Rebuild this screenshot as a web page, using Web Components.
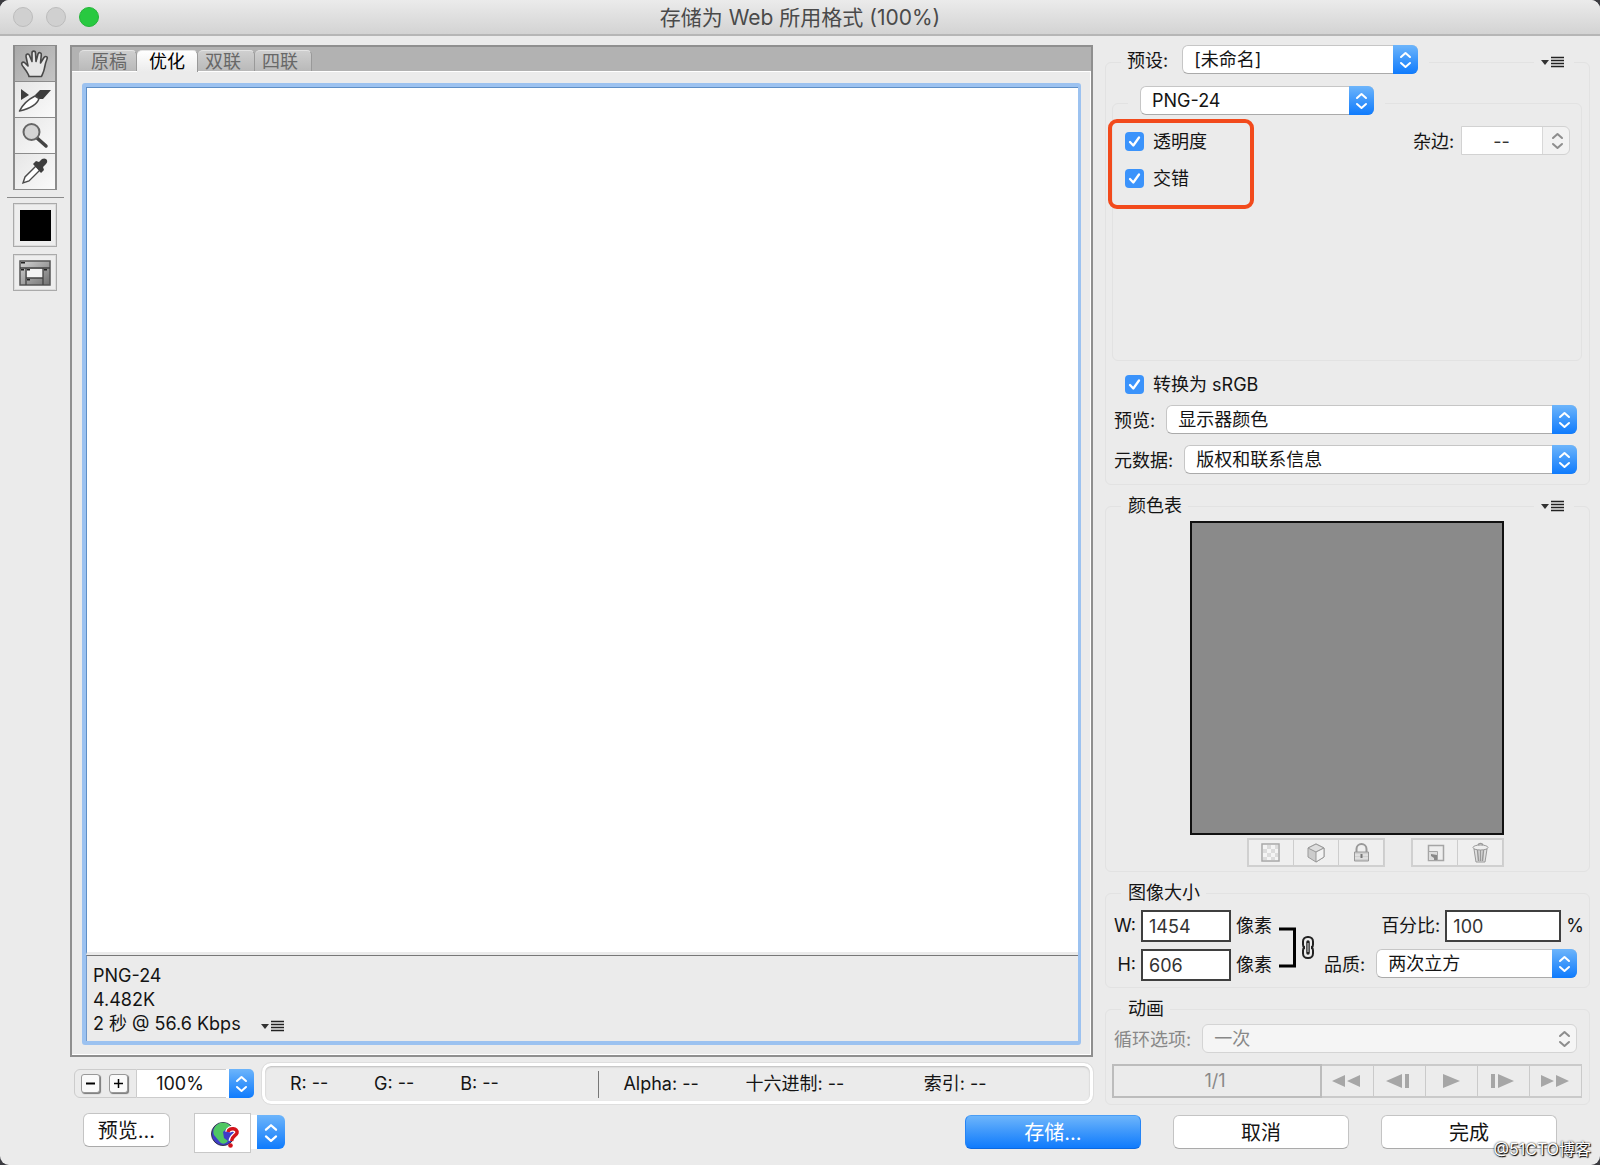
<!DOCTYPE html>
<html lang="zh-CN">
<head>
<meta charset="utf-8">
<title>存储为 Web 所用格式</title>
<style>
html, body { margin: 0; min-height: 100vh; }
body {
  display: flex; background: #3b3b40; color: #141414;
  font: 18px/24px Inter, "Noto Sans CJK SC", sans-serif;
}
</style>
</head>
<body>
<save-dialog></save-dialog>
<script>
const define = (name, render, wire) => customElements.define(name, class extends HTMLElement {
  constructor() { super(); this.attachShadow({ mode: 'open' }); }
  connectedCallback() {
    this.shadowRoot.innerHTML = '<style>*{box-sizing:border-box}button,input,select{font:inherit;color:inherit;margin:0}button{cursor:pointer;padding:0}</style>' +
      render((key, fallback = '') => this.getAttribute(key) ?? fallback, this);
    if (wire) wire(this.shadowRoot, this);
  }
});

const chevrons = (color, w = 25, h = 29) => `<svg width="${w}" height="${h}" viewBox="0 0 25 29" fill="none" stroke="${color}" stroke-width="2" stroke-linecap="round" stroke-linejoin="round" aria-hidden="true"><path d="M8 12 12.500 8 17 12M8 18 12.500 22 17 18"/></svg>`;
const blue = 'linear-gradient(#6db5fb, #3d97fb 50%, #0f7bfd)';

define('title-bar', a => `
<style>
:host { display: grid; grid-template-columns: 1fr auto 1fr; align-items: center; height: 36px; padding: 0 13px; box-sizing: border-box;
  background: linear-gradient(#ebebeb, #d3d3d3); border-bottom: 2px solid #b6b6b6; border-radius: 9px 9px 0 0; }
.lights { display: flex; gap: 13px; }
.lights button { width: 20px; height: 20px; border-radius: 50%; border: 1px solid #bcbcbc; background: #d0d0d0; }
.lights .zoom { background: #28c940; border-color: #24b539; }
h1 { margin: 0; padding-top: 2px; font-size: 21px; line-height: 32px; font-weight: 400; color: #4a4a4a; }
</style>
<div class="lights"><button aria-label="关闭"></button><button aria-label="最小化"></button><button class="zoom" aria-label="缩放"></button></div>
<h1><slot></slot></h1>`);

define('tool-strip', () => `
<style>
:host { display: flex; flex-direction: column; width: 70px; padding: 9px 13px 0; box-sizing: border-box; }
.set { display: flex; flex-direction: column; border: solid #8b8b8b; border-width: 1px 2px 0; }
.set button { display: grid; place-items: center; height: 36px; border: 0; border-bottom: 1px solid #8b8b8b; background: linear-gradient(135deg, #e6e6e6, #fafafa); }
.set button.on { background: linear-gradient(135deg, #a9a9a9, #c4c4c4); }
hr { width: 57px; align-self: center; margin: 7px 0 5px; border: 0; border-top: 1px solid #8b8b8b; }
.well { display: grid; place-items: center; height: 44px; border: 1px solid #aaa; background: #eee; outline: 1px solid #ddd; outline-offset: -2px; }
.well i { width: 31px; height: 31px; background: #000; }
.slices { height: 37px; margin-top: 7px; }
</style>
<div class="set">
<button class="on" aria-label="抓手工具"><svg width="32" height="32" viewBox="0 0 32 32"><path d="M10 28.500C9 24 4 19 3 17c-1-2 .5-3.500 2.500-2.500L9 18 7 8.500C6.500 6 9.500 5 10.500 7.500l2.500 6V5c0-2.500 3.500-2.500 3.500 0l.5 8.500 2-7.500c.8-2.300 3.700-1.500 3.300.8L21.500 15 25 9.500c1.500-2 4-.8 3 1.500-1.500 3.500-2 6-2.500 9-.4 3-1.500 5-3 8.500z" fill="#e6e6e6" stroke="#484848" stroke-width="1.600" stroke-linejoin="round"/></svg></button>
<button aria-label="切片选择工具"><svg width="34" height="28" viewBox="0 0 34 28"><path d="M3 3v11l8-5zM17 9l5-5h11l-8 9h-6z" fill="#3d3d3d"/><path d="M1.500 25C5 18 11 13 17 10l4 2.500C19 19 10 23 1.500 25z" fill="#fff" stroke="#4a4a4a" stroke-width="1.500" stroke-linejoin="round"/></svg></button>
<button aria-label="缩放工具"><svg width="30" height="30" viewBox="0 0 30 30"><path d="m17 17 9 8" stroke="#444" stroke-width="3.500" stroke-linecap="round"/><circle cx="11.500" cy="11" r="8" fill="#d4d4d4" stroke="#666" stroke-width="2"/></svg></button>
<button aria-label="吸管工具"><svg width="30" height="30" viewBox="0 0 30 30"><path d="M16 9 5 20l-2 6 6-2 11-11z" fill="#fff" stroke="#4a4a4a" stroke-width="1.400"/><path d="m13 7 3-3 3 1 3-3c4-2 7 2 4 5l-3 3 1 3-3 3z" fill="#3d3d3d"/></svg></button>
</div>
<hr>
<button class="well" aria-label="吸管颜色"><i></i></button>
<button class="well slices" aria-label="切换切片可见性"><svg width="32" height="26" viewBox="0 0 32 26"><defs><linearGradient id="g" x1="0" y1="0" x2="1" y2="1"><stop stop-color="#d4d4d4"/><stop offset="1" stop-color="#707070"/></linearGradient></defs><path d="M1 1h30v24H1z" fill="url(#g)" stroke="#555" stroke-width="1.500"/><path d="M8 9h16v9H8z" fill="#f4f4f4"/><path d="M1 8h30M7 8v17M24 8v17M7 18h17" stroke="#444" stroke-width="1.300" fill="none"/><path d="M2 2h4v1.500H2zM2 9h3v1.500H2zM8 9h3v1.500H8zM25 9h3v1.500h-3zM8 19h3v1.500H8z" fill="#222"/></svg></button>`);

define('view-tabs', a => `
<style>
:host { display: flex; align-items: flex-end; height: 25px; padding-left: 7px; box-sizing: border-box; background: #b2b2b2; border-bottom: 1px solid #fff; }
button { height: 21px; padding: 2px 13px 0 7px; border: 0; border-right: 1px solid #999; border-top: 1px solid #e4e4e4; border-radius: 5px 5px 0 0;
  background: linear-gradient(#cfcfcf, #b9b9b9); color: #686868; line-height: 18px; }
button:first-of-type { padding: 2px 9px 0 12px; }
button.on { height: 22px; margin-bottom: -1px; padding: 1px 12px 0; background: linear-gradient(#fff, #ebebeb); color: #000; }
</style>${a('items').split(',').map(t => `<button${t === a('current') ? ' class="on" aria-pressed="true"' : ''}>${t}</button>`).join('')}`);

define('menu-glyph', () => `
<style>:host { display: block; } button { display: block; border: 0; background: none; }</style>
<button aria-label="菜单"><svg width="24" height="12" viewBox="0 0 24 12" style="display:block"><path d="M0 4h8L4 9z" fill="#333"/><path d="M10 1h13M10 4h13M10 7h13M10 10h13" transform="translate(0 .5)" stroke="#222" stroke-width="1.500"/></svg></button>`);

define('preview-pane', () => `
<style>
:host { display: flex; flex-direction: column; flex: 1; border: 2px solid #8f8f8f; }
.body { flex: 1; display: flex; padding: 11px 9px 9px 10px; border: solid #fff; border-width: 0 1px 1px 0; }
.focus { flex: 1; display: flex; flex-direction: column; border: 4px solid #9cc2f0; border-right-width: 3px; border-radius: 3px; }
.canvas { flex: 1; background: #fff; border: solid #5f8fc6; border-width: 1px 0 0 1px; border-bottom: 3px solid #ebebeb; }
.info { height: 86px; padding: 7px 8px 0 6px; border-top: 1px solid #777; border-left: 1px solid #7199cb; }
p { margin: 0; display: flex; align-items: center; gap: 20px; height: 24px; padding-top: 1px; }
menu-glyph { padding-top: 4px; }
</style>
<view-tabs items="原稿,优化,双联,四联" current="优化"></view-tabs>
<div class="body"><div class="focus"><div class="canvas"></div>
<div class="info"><p>PNG-24</p><p>4.482K</p><p>2 秒 @ 56.6 Kbps <menu-glyph></menu-glyph></p></div></div></div>`);

define('status-row', () => `
<style>
:host { display: flex; align-items: center; gap: 8px; height: 43px; margin-top: 5px; padding-left: 4px; }
.zoom { display: flex; width: 180px; height: 29px; }
.steps { display: flex; align-items: center; gap: 9px; width: 63px; padding-left: 6px; border: 1px solid #ccc; border-radius: 6px 0 0 6px; }
.steps button { width: 19px; height: 19px; display: grid; border: 1px solid #999; border-radius: 3px; background: #fafafa; box-shadow: 1px 1px 1px #777; }
.zoom input { width: 90px; border: 1px solid #ccc; border-left: 0; background: #fff; text-align: center; padding: 1px 3px 0 0; }
.pop { margin-left: 2px; width: 25px; border: 0; border-radius: 0 5px 5px 0; background: ${blue}; box-shadow: -3px 0 #fff; }
svg { display: block; }
.readout { flex: 1; align-self: stretch; display: grid; grid-template-columns: 84fr 86fr 138fr 25fr 122fr 178fr 166fr; align-items: center;
  padding: 1px 0 0 25px; border: 3px solid #fff; border-radius: 9px; outline: 1px solid #dedede; box-shadow: inset 0 1px 2px #bbb; margin: 1px 0; white-space: nowrap; }
i { width: 1px; height: 27px; background: #777; }
</style>
<div class="zoom"><span class="steps"><button aria-label="缩小"><svg width="17" height="17"><path d="M4 8.500h9" stroke="#000" stroke-width="2"/></svg></button><button aria-label="放大"><svg width="17" height="17"><path d="M4 8.500h9M8.500 4v9" stroke="#000" stroke-width="1.500"/></svg></button></span><input aria-label="缩放级别" value="100%"><button class="pop" aria-label="选择缩放级别">${chevrons('#fff')}</button></div>
<div class="readout"><span>R: --</span><span>G: --</span><span>B: --</span><i></i><span>Alpha: --</span><span>十六进制: --</span><span>索引: --</span></div>`);

define('ui-select', a => {
  const active = a('off', null) === null && a('split', null) === null;
  return `
<style>
:host { display: flex; }
label { flex: 1; display: flex; align-items: center; gap: var(--label-gap, 11px); white-space: nowrap; }
.name { padding-top: 3px; }
.box { flex: 1; display: grid; grid-template-columns: 1fr 23px; height: 29px; border-radius: 6px; background: #fff; border: 1px solid #c6c6c6; border-bottom-color: #aaa; }
select { grid-area: 1 / 1 / 2 / 3; appearance: none; min-width: 0; border: 0; background: none; padding: 1px 30px 0 11px; line-height: 24px; opacity: 1; }
.arrows { grid-area: 1 / 2; margin: -1px; pointer-events: none; border-radius: 0 6px 6px 0; background: ${blue}; }
svg { display: block; }
:host([off]) { color: #888; }
:host([off]) .box { background: #f5f5f5; border-color: #d4d4d4; }
:host([off]) .arrows, :host([split]) .arrows { background: none; }
:host([split]) .box { border-color: #d2d2d2; background: linear-gradient(90deg, #fff 80px, #d8d8d8 80px 81px, #f2f2f2 81px); border-radius: 0 6px 6px 0; }
:host([split]) select { padding: 2px 28px 0 0; text-align-last: center; color: #333; }
</style>
<label>${a('label') ? `<span class="name">${a('label')}</span>` : ''}<span class="box"><select ${a('label') ? '' : `aria-label="${a('name')}"`} ${active ? '' : 'disabled'}><option>${a('value')}</option></select><span class="arrows">${chevrons(active ? '#fff' : '#8d8d8d')}</span></span></label>`;
});

define('ui-check', a => `
<style>
:host { display: flex; height: 30px; }
label { display: flex; align-items: center; gap: 9px; }
.tick { display: grid; }
.text { padding-top: 2px; }
input, svg { grid-area: 1 / 1; width: 19px; height: 19px; }
input { appearance: none; border-radius: 4px; border: 1px solid #bbb; background: #fff; }
input:checked { border: 0; background: #3b93fb; }
input:not(:checked) + svg { visibility: hidden; }
svg { pointer-events: none; }
</style>
<label><span class="tick"><input type="checkbox" checked><svg viewBox="0 0 19 19"><path d="m5 10 3.300 3.500L14 5.500" fill="none" stroke="#fff" stroke-width="2.300" stroke-linecap="round" stroke-linejoin="round"/></svg></span><span class="text"><slot></slot></span></label>`);

define('ui-field', a => `
<style>
:host { display: flex; }
label { display: flex; align-items: center; gap: 5px; white-space: nowrap; }
.name { min-width: var(--name, 0); text-align: right; }
input { width: var(--field, 90px); height: 32px; padding: 0 6px; border: 2px solid #3f3f3f; background: #fff; border-radius: 0; color: #333; }
</style>
<label><span class="name">${a('label')}</span><input value="${a('value')}"><span>${a('unit')}</span></label>`);

define('ui-group', a => `
<style>
:host { display: flex; flex-direction: column; --head: 30px; padding-top: calc(var(--head) / 2); }
:host([tall]) { --head: 34px; }
.box { flex: 1; display: flex; flex-direction: column; border: 1px solid #e2e2e2; border-radius: 6px; }
header { display: flex; align-items: center; justify-content: space-between; height: var(--head); margin: calc(var(--head) / -2 - 1px) 15px 0; }
header > * { background: #ebebeb; }
.legend { display: flex; align-self: center; padding: 0 6px 0 7px; }
:host([tall]) .legend { align-self: flex-start; padding: 0 11px 0 6px; }
:host([wide]) .legend { padding-left: 12px; }
menu-glyph { padding: 0 9px 0 7px; }
</style>
<div class="box"><header><div class="legend"><slot name="legend"></slot></div>${a('menu', null) === null ? '' : '<menu-glyph></menu-glyph>'}</header><slot></slot></div>`);

define('color-table', () => {
  const icons = [
    ['映射透明', '<path d="M2 2h17v17H2z" fill="#f4f4f4" stroke="#a8a8a8" stroke-width="1.500"/><path d="M3 7h4v4H3zM7 3h4v4H7zM11 7h4v4h-4zM7 11h4v4H7zM15 11h3v4h-3zM15 3h3v4h-3zM11 15h4v3h-4zM3 15h4v3H3z" fill="#dcdcdc"/>'],
    ['Web 转换', '<path d="m11 2 8 4v9l-8 5-8-5V6z" fill="#ccc" stroke="#999"/><path d="m3 6 8 4 8-4-8-4z" fill="#dedede" stroke="#999"/><path d="m11 10 8-4v9l-8 5z" fill="#f3f3f3" stroke="#999"/>'],
    ['锁定颜色', '<path d="M6.500 10V7a5 5 0 0 1 10 0v3" fill="none" stroke="#999" stroke-width="2"/><path d="M4.500 10h14v9h-14z" fill="#d0d0d0" stroke="#999"/><path d="M5 13h13M5 16h13" stroke="#efefef"/><path d="M11.500 12v4" stroke="#777" stroke-width="2"/>'],
    ['新建颜色', '<path d="M4.500 3.500h15v15h-15z" fill="#eee" stroke="#a5a5a5" stroke-width="1.500"/><path d="M4.500 9.500h9v9h-9z" fill="#ddd" stroke="#a5a5a5"/><path d="M7 12v2l3 2v2h3v-5z" fill="#888"/>'],
    ['删除颜色', '<path d="m5 7 2 13h9l2-13z" fill="#e0e0e0" stroke="#999"/><path d="m8.500 8 1 11M11.500 8v11M14.500 8l-1 11" stroke="#999" stroke-width="1.500"/><ellipse cx="11.500" cy="5.500" rx="7.500" ry="2.500" fill="#eee" stroke="#999"/><path d="M9 3c1-2 4-2 5 0" fill="none" stroke="#999" stroke-width="1.500"/>']
  ];
  const btn = ([n, p]) => `<button aria-label="${n}" disabled><svg width="23" height="22" viewBox="0 0 23 22">${p}</svg></button>`;
  return `
<style>
:host { display: flex; flex-direction: column; align-self: center; gap: 3px; padding: 0 1px 4px 0; }
.grid { width: 314px; height: 314px; border: 2px solid #111; background: #8a8a8a; }
.bar { display: flex; justify-content: flex-end; gap: 26px; }
.bar span { display: flex; border: 2px solid #d0d0d0; border-right-width: 1px; }
button { width: 45px; height: 25px; display: grid; place-items: center; border: 0; border-right: 1px solid #cdcdcd; background: #efefef; }
</style><div class="grid"></div><div class="bar"><span>${icons.slice(0, 3).map(btn).join('')}</span><span>${icons.slice(3).map(btn).join('')}</span></div>`;
});

define('image-size', () => `
<style>
:host { display: flex; padding: 2px 7px 6px 8px; }
.col { display: flex; flex-direction: column; gap: 7px; --name: 22px; }
.end { flex: 1; align-items: flex-end; --name: 0; --field: 116px; }
ui-select { width: 253px; margin-right: 5px; }
.end ui-field { margin-right: -2px; }
svg { margin: 16px 0 0 7px; }
</style>
<div class="col"><ui-field label="W:" value="1454" unit="像素"></ui-field><ui-field label="H:" value="606" unit="像素"></ui-field></div>
<svg width="36" height="42" viewBox="0 0 36 42" fill="none" role="img" aria-label="约束比例"><path d="M0 3h15.500v37H0" stroke="#000" stroke-width="3"/><rect x="24" y="11" width="10" height="12" rx="4.500" stroke="#222" stroke-width="2"/><rect x="24" y="20" width="10" height="12" rx="4.500" stroke="#222" stroke-width="2"/><path d="M29 16v11" stroke="#eee" stroke-width="6" stroke-linecap="round"/><path d="M29 16v11" stroke="#222" stroke-width="3.500" stroke-linecap="round"/><path d="M29 17v9" stroke="#ddd" stroke-width="1"/></svg>
<div class="col end"><ui-field label="百分比:" value="100" unit="%"></ui-field><ui-select label="品质:" value="两次立方"></ui-select></div>`);

define('playback-bar', () => {
  const b = (n, p) => `<button aria-label="${n}" disabled><svg width="30" height="16" viewBox="0 0 30 16" fill="#a6a6a6">${p}</svg></button>`;
  return `
<style>
:host { display: flex; height: 34px; margin: 11px 7px 6px 6px; }
output { flex: 1; display: grid; place-items: center; border: 2px solid #bcbcbc; padding-right: 4px; color: #888; }
button { width: 52px; display: grid; place-items: center; border: 2px solid #cacaca; border-left: 0; border-right-width: 1px; background: #ececec; padding-right: 3px; }
</style><output>1/1</output>${b('第一帧', '<path d="M1 8 14 2v12zM16 8l13-6v12z"/>')}${b('上一帧', '<path d="M3 8 19 1v14zM22 1h4v14h-4z"/>')}${b('播放', '<path d="M8 1v14l17-7z"/>')}${b('下一帧', '<path d="M4 1h4v14H4zM11 1v14l16-7z"/>')}${b('最后一帧', '<path d="M2 2v12l13-6zM17 2v12l13-6z"/>')}`;
});

define('settings-panel', () => `
<style>
:host { display: flex; flex-direction: column; gap: 6px; width: 485px; flex: none; padding-top: 9px; }
.preset { width: 291px; --label-gap: 14px; }
.format { width: 234px; }
.inner { margin: 7px 7px 8px 6px; }
.opts { display: flex; justify-content: space-between; min-height: 240px; padding: 6px 11px 0 0; }
.checks { position: relative; display: flex; flex-direction: column; align-self: flex-start; gap: 7px; padding-left: 12px; }
.mark { position: absolute; left: -5px; top: -7px; width: 146px; height: 90px; border: 4px solid #f24a1c; border-radius: 9px; pointer-events: none; }
.matte { width: 157px; align-self: flex-start; --label-gap: 7px; }
.row { margin: 0 12px 0 8px; }
.rgb { margin: 0 19px 6px; }
.meta { margin-top: 11px; margin-bottom: 10px; }
</style>
<ui-group tall menu>
  <ui-select slot="legend" class="preset" label="预设:" value="[未命名]"></ui-select>
  <ui-group class="inner" tall wide>
    <ui-select slot="legend" class="format" name="文件格式" value="PNG-24"></ui-select>
    <div class="opts"><div class="checks"><ui-check>透明度</ui-check><ui-check>交错</ui-check><div class="mark"></div></div>
    <ui-select class="matte" split label="杂边:" value="--"></ui-select></div>
  </ui-group>
  <ui-check class="rgb">转换为 sRGB</ui-check>
  <ui-select class="row" label="预览:" value="显示器颜色"></ui-select>
  <ui-select class="row meta" label="元数据:" value="版权和联系信息"></ui-select>
</ui-group>
<ui-group menu><span slot="legend">颜色表</span><color-table></color-table></ui-group>
<ui-group><span slot="legend">图像大小</span><image-size></image-size></ui-group>
<ui-group><span slot="legend">动画</span><ui-select class="row" off label="循环选项:" value="一次"></ui-select><playback-bar></playback-bar></ui-group>`);

define('push-button', a => `
<style>
:host { display: block; width: 176px; }
button { width: 100%; height: 34px; border: 1px solid #c4c4c4; border-bottom-color: #aaa; border-radius: 6px; background: #fff; font-size: 20px; line-height: 30px; padding-top: 1px; }
:host([primary]) button { color: #fff; border-color: #4a9df5 #2584f5 #0c69e0; background: ${blue}; }
</style><button><slot></slot></button>`);

define('browser-picker', () => `
<style>
:host { display: flex; align-items: flex-start; }
.icon { width: 57px; height: 40px; display: grid; place-items: center; padding: 4px 0 0 4px; background: #fff; border: 1px solid #c8c8c8; }
.pop { width: 34px; height: 34px; margin-top: 2px; padding-left: 6px; border: 0; border-radius: 0 6px 6px 0; background: linear-gradient(90deg, #fff 6px, transparent 6px), ${blue}; }
svg { display: block; }
</style>
<button class="icon" aria-label="在浏览器中预览"><svg width="30" height="28" viewBox="0 0 30 28"><circle cx="13" cy="13" r="11.500" fill="#3f3dc8" stroke="#334"/><path d="M10 2c6-1 10 1 12 5l-6 1-3 3 1 6 4 3c-3 4-7 3-9 0l-5-6c-2-5 1-10 6-12z" fill="#4fc763"/><path d="M18 11c1-5 10-4 9 1-1 3-5 3-5.500 8" fill="none" stroke="#fff" stroke-width="6"/><path d="M18 11c1-5 10-4 9 1-1 3-5 3-5.500 8" fill="none" stroke="#d3141c" stroke-width="3.500"/><circle cx="20.500" cy="24.500" r="2.300" fill="#d3141c"/></svg></button>
<button class="pop" aria-label="选择浏览器">${chevrons('#fff', 28, 33)}</button>`);

define('save-dialog', () => `
<style>
:host { flex: 1; display: flex; flex-direction: column; min-height: 100vh; background: #ebebeb; border-radius: 9px; }
main { flex: 1; display: flex; padding-right: 10px; }
.center { flex: 1; display: flex; flex-direction: column; padding-top: 9px; margin-right: 12px; min-width: 0; }
footer { display: flex; align-items: flex-start; height: 60px; padding: 8px 43px 0 83px; box-sizing: border-box; }
.preview { width: 87px; margin-right: 24px; }
.acts { flex: 1; display: flex; justify-content: flex-end; gap: 32px; padding-top: 2px; }
.credit { position: absolute; right: 9px; bottom: 4px; font-size: 16px; color: #fff; text-shadow: 1px 1px 1px #000, 0 0 2px #000; }
</style>
<title-bar>存储为 Web 所用格式 (100%)</title-bar>
<main><tool-strip></tool-strip><div class="center"><preview-pane></preview-pane><status-row></status-row></div><settings-panel></settings-panel></main>
<footer><push-button class="preview">预览...</push-button><browser-picker></browser-picker>
<div class="acts"><push-button primary>存储...</push-button><push-button>取消</push-button><push-button>完成</push-button></div></footer>
<span class="credit">@51CTO博客</span>`);
</script>
</body>
</html>
